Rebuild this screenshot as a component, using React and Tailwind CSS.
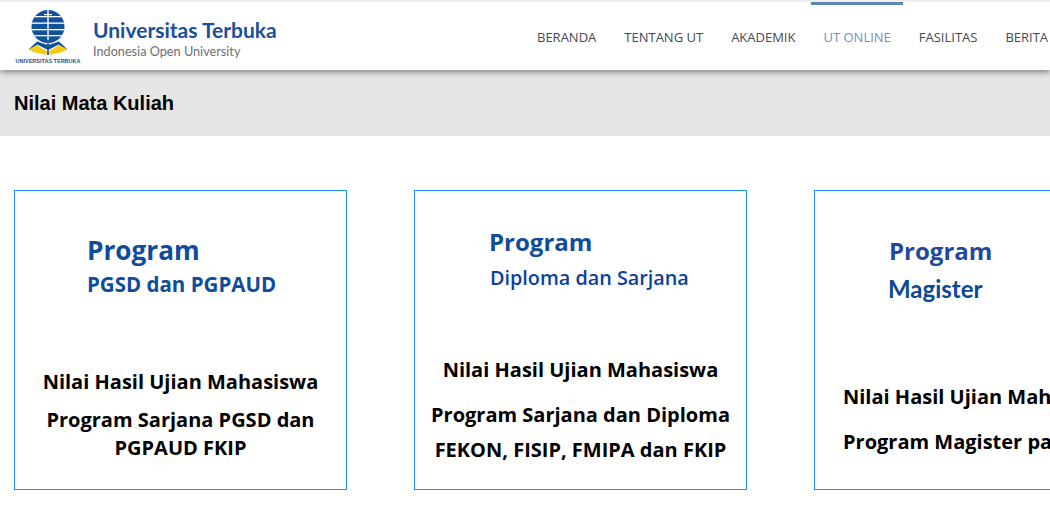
const nav = ["BERANDA", "TENTANG UT", "AKADEMIK", "UT ONLINE", "FASILITAS", "BERITA"];

function Logo() {
  return (
    <svg width="40" height="46" viewBox="0 0 40 46" className="block">
      <defs>
        <clipPath id="globe"><circle cx="20" cy="16.5" r="16.5" /></clipPath>
      </defs>
      <g clipPath="url(#globe)">
        <rect x="0" y="0" width="40" height="40" fill="#12519b" />
        <rect x="0" y="6" width="40" height="1.3" fill="#fff" />
        <rect x="0" y="12.5" width="40" height="1.3" fill="#fff" />
        <rect x="0" y="19" width="40" height="1.3" fill="#fff" />
        <rect x="0" y="25" width="40" height="1.3" fill="#fff" />
        <rect x="19.3" y="0" width="1.4" height="40" fill="#fff" />
        <rect x="16" y="4" width="8" height="1.2" fill="#fff" />
      </g>
      <path d="M20 37 L9 31 L0.5 39.5 L6 42.5 L18.5 45.5 L20 44 L21.5 45.5 L34 42.5 L39.5 39.5 L31 31 Z" fill="#fff" />
      <path d="M20 35 L9 31.5 L0.5 39.5 L5 40 L9 34.5 L19 39.5 L21 39.5 L31 34.5 L35 40 L39.5 39.5 L31 31.5 Z" fill="#12519b" />
      <path d="M0.5 39.5 L8.7 35 L18.7 41 L18.7 45 L5.5 42 Z" fill="#f2cb1d" />
      <path d="M39.5 39.5 L31.3 35 L21.3 41 L21.3 45 L34.5 42 Z" fill="#f2cb1d" />
      <path d="M20 30 L20 45" stroke="#12519b" strokeWidth="1.6" />
    </svg>
  );
}

function Card({ titleCls, title, subCls, sub, children, bodyCls }) {
  return (
    <div className="w-[333px] h-[300px] shrink-0 border border-[#1e90ff] bg-white flex flex-col">
      <p className={titleCls}>{title}</p>
      <p className={subCls}>{sub}</p>
      <div className={bodyCls}>{children}</div>
    </div>
  );
}

export default function App() {
  return (
    <div className="w-[1050px] h-[517px] overflow-hidden bg-white font-['Open_Sans',sans-serif]">
      <header className="relative z-10 h-[70px] border-t-2 border-[#eeeeee] bg-white shadow-[0_2px_6px_rgba(0,0,0,0.45)] flex items-start">
        <div className="w-[523px] shrink-0 flex items-start pl-3.5">
          <div className="w-[68px] flex flex-col items-center pt-[8px]">
            <Logo />
            <span className="mt-[2px] text-[5.5px] leading-[7px] font-bold text-[#1c4f95] whitespace-nowrap font-['Liberation_Sans',sans-serif]">UNIVERSITAS TERBUKA</span>
          </div>
          <div className="ml-[11px] pt-[15px]">
            <div className="text-[21px] leading-[26px] font-bold text-[#1b4f9c] whitespace-nowrap font-['Lato',sans-serif]">Universitas Terbuka</div>
            <div className="text-[12.7px] leading-[16px] text-[#6f6f6f] whitespace-nowrap font-['Lato',sans-serif]">Indonesia Open University</div>
          </div>
        </div>
        <nav className="flex shrink-0">
          {nav.map((n) => (
            <a
              key={n}
              className={
                n === "UT ONLINE"
                  ? "mx-0.5 px-3 pt-[24px] h-[68px] border-t-[3px] border-[#5b8ab5] text-[13px] leading-[17px] text-[#6f93bd] whitespace-nowrap"
                  : "mx-0.5 px-3 pt-[24px] h-[68px] border-t-[3px] border-transparent text-[13px] leading-[17px] text-[#3f4a54] whitespace-nowrap"
              }
            >
              {n}
            </a>
          ))}
        </nav>
      </header>

      <div className="h-[66px] bg-[#e5e5e5] pl-3.5 pt-[21px]">
        <h1 className="text-[20px] leading-[24px] font-bold text-black font-['Liberation_Sans',sans-serif]">Nilai Mata Kuliah</h1>
      </div>

      <div className="flex gap-[67px] pl-3.5 pt-[54px]">
        <Card
          titleCls="pl-[72px] pt-[41px] text-[26.2px] leading-[36px] font-bold text-[#0f4c9c]"
          title="Program"
          subCls="pl-[72px] pt-[2px] text-[20.5px] leading-[28px] font-bold text-[#0f4c9c]"
          sub="PGSD dan PGPAUD"
          bodyCls="pt-[70px] text-center text-[20px] font-bold text-black"
        >
          <p className="leading-[28px]">Nilai Hasil Ujian Mahasiswa</p>
          <p className="mt-[10px] leading-[28px]">Program Sarjana PGSD dan<br />PGPAUD FKIP</p>
        </Card>
        <Card
          titleCls="pl-[74px] pt-[34px] text-[24px] leading-[34px] font-bold text-[#0f4c9c]"
          title="Program"
          subCls="pl-[75px] pt-[5px] text-[19.8px] leading-[28px] font-semibold text-[#0b3fa0]"
          sub="Diploma dan Sarjana"
          bodyCls="pt-[64px] text-center text-[20px] font-bold text-black"
        >
          <p className="leading-[28px]">Nilai Hasil Ujian Mahasiswa</p>
          <p className="mt-[17px] leading-[28px]">Program Sarjana dan Diploma</p>
          <p className="mt-[7px] leading-[28px]">FEKON, FISIP, FMIPA dan FKIP</p>
        </Card>
        <Card
          titleCls="pl-[74px] pt-[43px] text-[24px] leading-[34px] font-bold text-[#1f4a9c]"
          title="Program"
          subCls="pl-[73px] pt-[4px] text-[24px] leading-[34px] font-bold text-[#0a4a92] font-['Lato',sans-serif]"
          sub="Magister"
          bodyCls="pt-[77px] pl-[28px] text-[20px] font-bold text-black whitespace-nowrap"
        >
          <p className="leading-[28px]">Nilai Hasil Ujian Mahasiswa</p>
          <p className="mt-[17px] leading-[28px]">Program Magister pada</p>
        </Card>
      </div>
    </div>
  );
}
